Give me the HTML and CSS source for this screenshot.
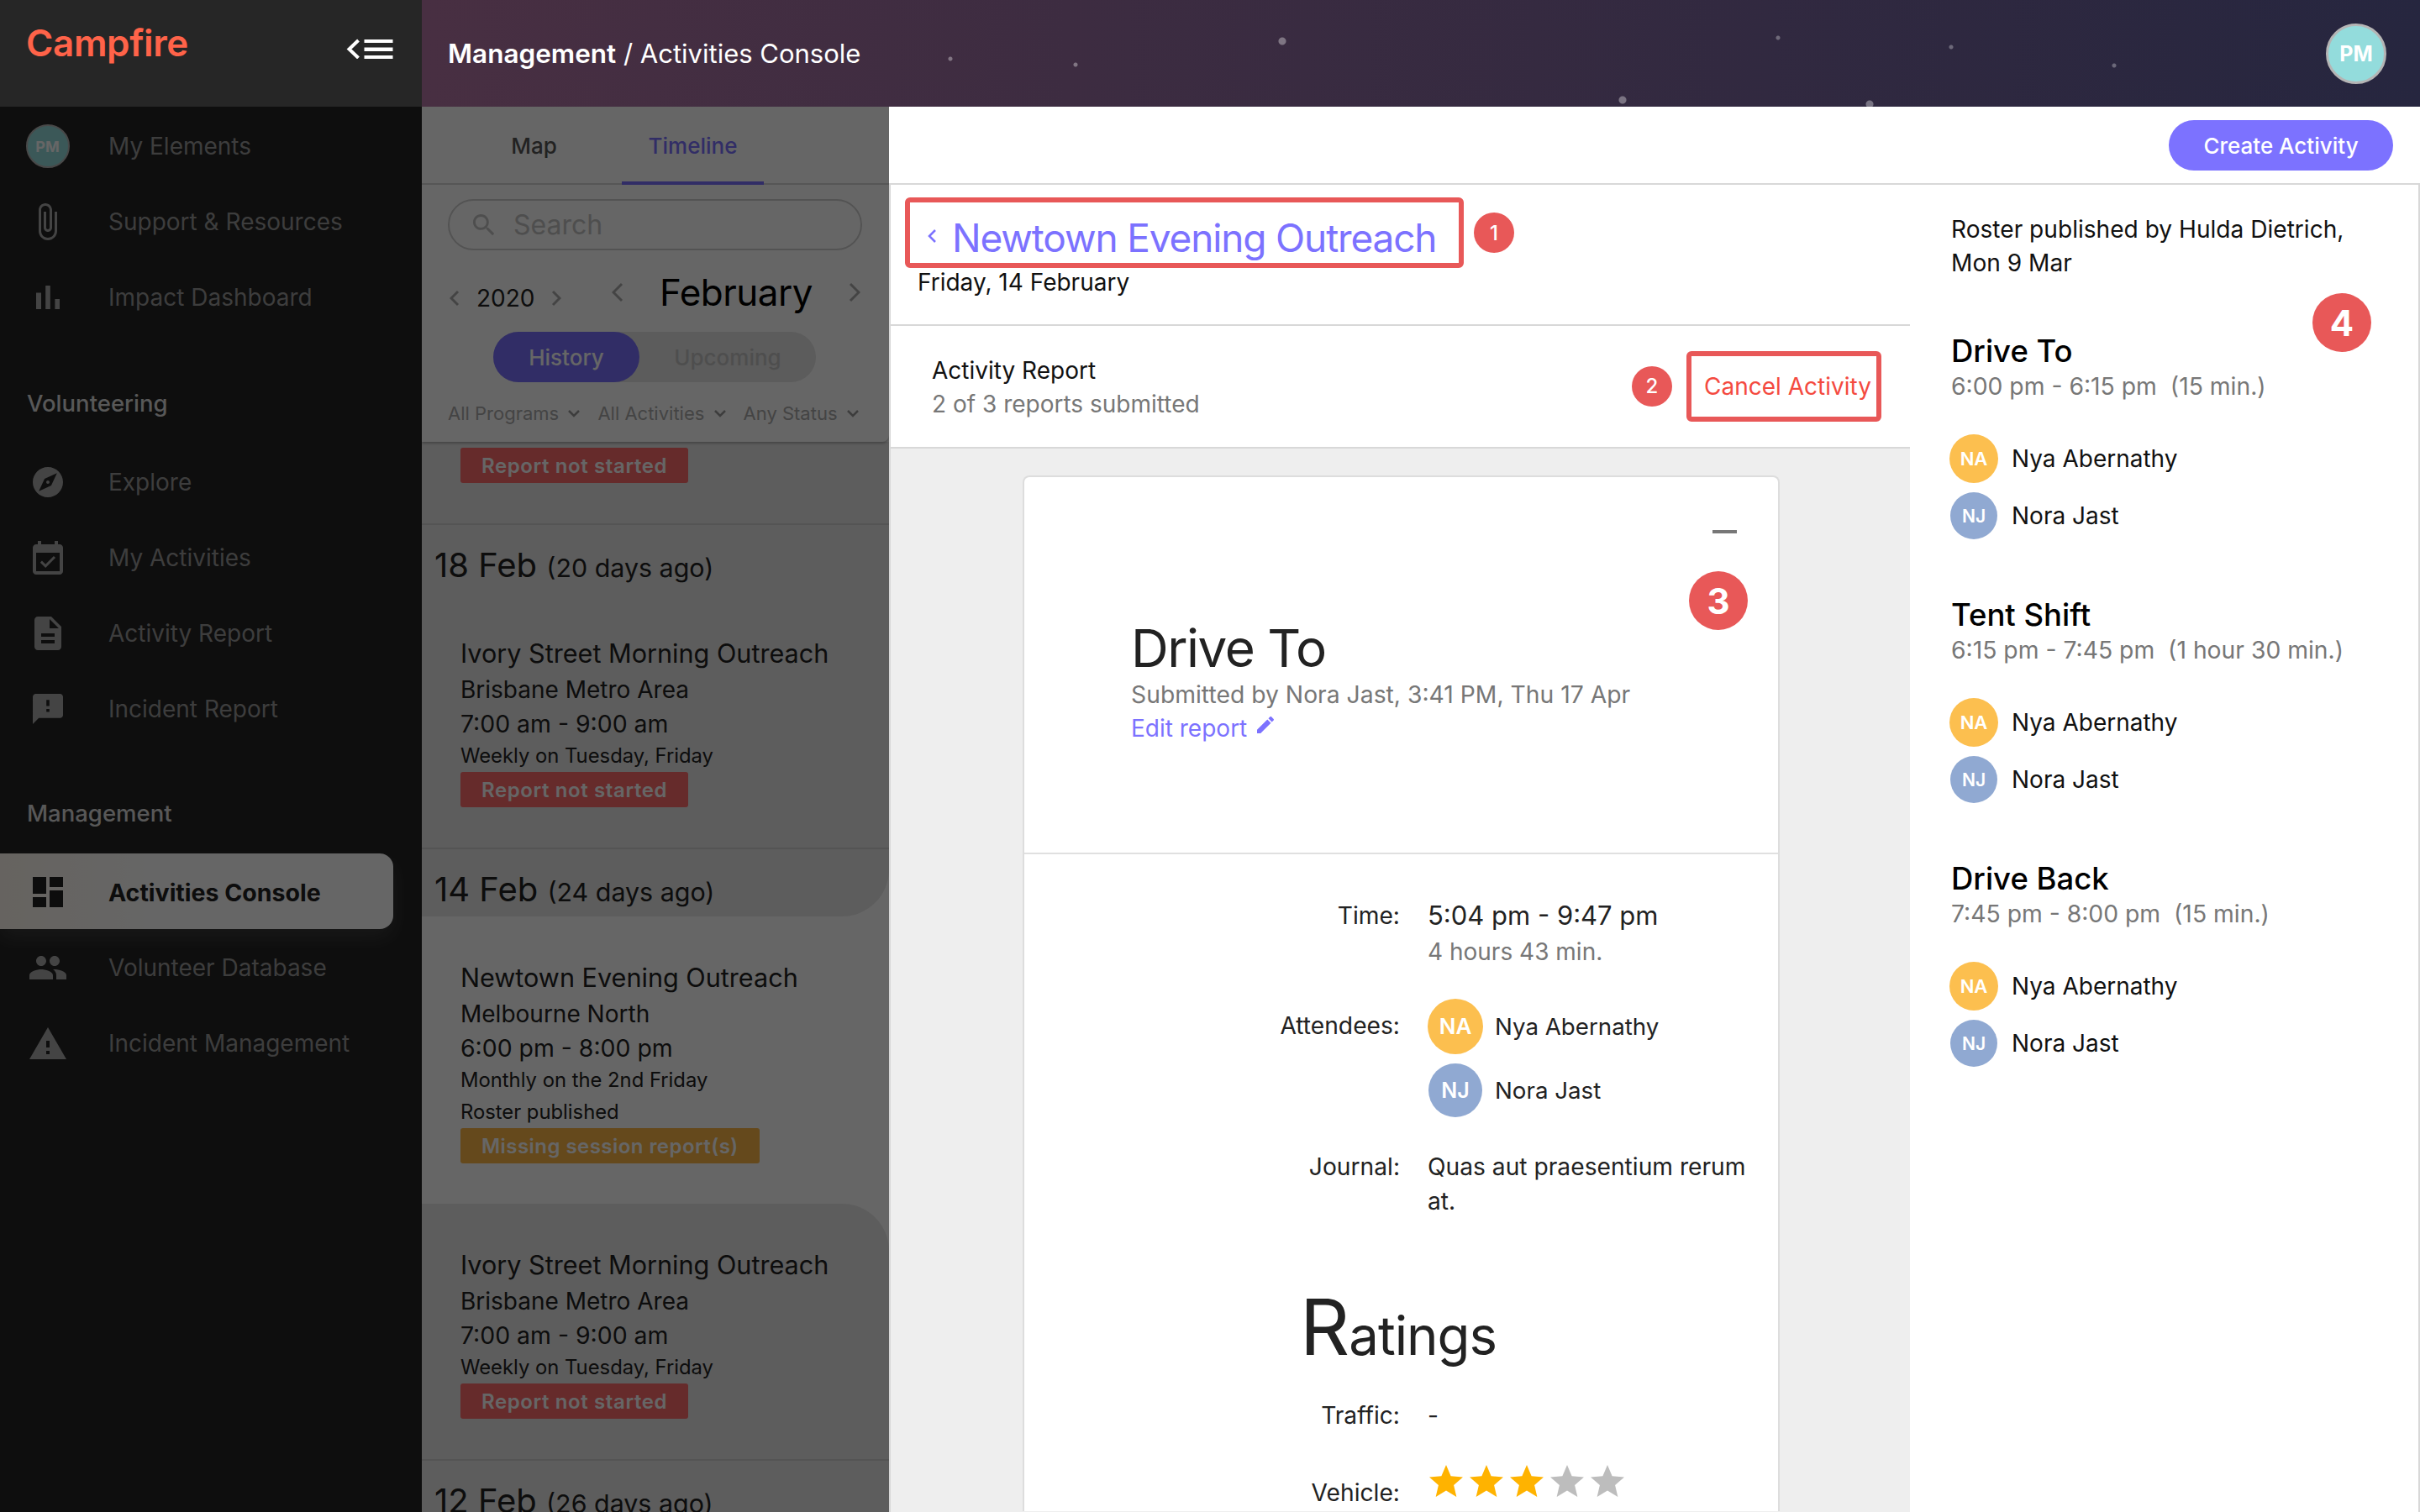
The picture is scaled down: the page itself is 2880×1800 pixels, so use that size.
FILE: index.html
```html
<!DOCTYPE html>
<html lang="en">
  <head>
    <meta charset="UTF-8" />
    <meta name="viewport" content="width=device-width, initial-scale=1.0" />
    <title>Activities Console</title>
    <link rel="stylesheet" href="styles.css">
  </head>
  <body>
    <header class="topbar">
      <div class="brand">
        <span class="logo">Campfire</span>
        <button class="collapse" type="button" aria-label="Collapse menu">
          <svg class="collapse-icon" viewBox="0 0 56 24"><path d="M15 2 4 12.500 15 23" fill="none" stroke="#fff" stroke-width="4"/><path d="M22 1h34v4H22zM22 10.500h34v4.500H22zM22 20h34v4H22z" fill="#fff"/></svg>
        </button>
      </div>
      <div class="crumbs">
        <p class="crumb-text"><strong>Management</strong> / Activities Console</p>
        <div class="avatar avatar-user">PM</div>
      </div>
    </header>

    <div class="main">
      <nav class="sidebar">
        <a class="nav-item"><span class="nav-icon"><span class="avatar avatar-nav">PM</span></span>My Elements</a>
        <a class="nav-item"><span class="nav-icon"><svg class="icon-clip" viewBox="6 1 13 22"><path d="M16.500 6v11.500c0 2.210-1.790 4-4 4s-4-1.790-4-4V5c0-1.380 1.120-2.500 2.500-2.500s2.500 1.120 2.500 2.500v10.500c0 .55-.45 1-1 1s-1-.45-1-1V6H10v9.500c0 1.380 1.120 2.500 2.500 2.500s2.500-1.120 2.500-2.500V5c0-2.210-1.790-4-4-4S7 2.790 7 5v12.500c0 3.040 2.460 5.500 5.500 5.500s5.500-2.460 5.500-5.500V6h-1.500z"/></svg></span>Support &amp; Resources</a>
        <a class="nav-item"><span class="nav-icon"><svg class="icon-bars" viewBox="5 5 14 14"><path d="M5 9.200h3V19H5zM10.600 5h2.800v14h-2.800zm5.600 8H19v6h-2.800z"/></svg></span>Impact Dashboard</a>

        <h3 class="nav-label nav-label-first">Volunteering</h3>
        <a class="nav-item"><span class="nav-icon"><svg class="icon-md" viewBox="2 2 20 20"><path d="M12 10.900c-.61 0-1.100.49-1.100 1.100s.49 1.100 1.100 1.100c.61 0 1.100-.49 1.100-1.100s-.49-1.100-1.100-1.100zM12 2C6.480 2 2 6.480 2 12s4.480 10 10 10 10-4.480 10-10S17.520 2 12 2zm2.190 12.190L6 18l3.810-8.190L18 6l-3.810 8.190z"/></svg></span>Explore</a>
        <a class="nav-item"><span class="nav-icon"><svg class="icon-md" viewBox="3 1 18 20"><path d="M16.530 11.060 15.470 10l-4.880 4.880-2.120-2.120-1.060 1.060L10.590 17l5.940-5.940zM19 3h-1V1h-2v2H8V1H6v2H5c-1.110 0-1.990.9-1.990 2L3 19c0 1.100.89 2 2 2h14c1.100 0 2-.9 2-2V5c0-1.100-.9-2-2-2zm0 16H5V8h14v11z"/></svg></span>My Activities</a>
        <a class="nav-item"><span class="nav-icon"><svg class="icon-md" viewBox="4 2 16 20"><path d="M14 2H6c-1.100 0-1.990.9-1.990 2L4 20c0 1.100.89 2 1.990 2H18c1.100 0 2-.9 2-2V8l-6-6zm2 16H8v-2h8v2zm0-4H8v-2h8v2zm-3-5V3.500L18.500 9H13z"/></svg></span>Activity Report</a>
        <a class="nav-item"><span class="nav-icon"><svg class="icon-md" viewBox="2 2 20 20"><path d="M20 2H4c-1.100 0-1.990.9-1.990 2L2 22l4-4h14c1.100 0 2-.9 2-2V4c0-1.100-.9-2-2-2zm-7 12h-2v-2h2v2zm0-4h-2V6h2v4z"/></svg></span>Incident Report</a>

        <h3 class="nav-label nav-label-second">Management</h3>
        <a class="nav-item nav-item-active"><span class="nav-icon"><svg class="icon-md" viewBox="3 3 18 18"><path d="M3 13h8V3H3v10zm0 8h8v-6H3v6zm10 0h8V11h-8v10zm0-18v6h8V3h-8z"/></svg></span>Activities Console</a>
        <a class="nav-item"><span class="nav-icon"><svg class="icon-wide" viewBox="1 5 22 14"><path d="M16 11c1.660 0 2.990-1.340 2.990-3S17.660 5 16 5c-1.660 0-3 1.340-3 3s1.340 3 3 3zm-8 0c1.660 0 2.990-1.340 2.990-3S9.660 5 8 5C6.340 5 5 6.340 5 8s1.340 3 3 3zm0 2c-2.330 0-7 1.170-7 3.500V19h14v-2.500c0-2.330-4.670-3.500-7-3.500zm8 0c-.29 0-.62.02-.97.05 1.160.84 1.970 1.970 1.970 3.450V19h6v-2.500c0-2.330-4.670-3.500-7-3.500z"/></svg></span>Volunteer Database</a>
        <a class="nav-item"><span class="nav-icon"><svg class="icon-wide" viewBox="1 2 22 19"><path d="M1 21h22L12 2 1 21zm12-3h-2v-2h2v2zm0-4h-2v-4h2v4z"/></svg></span>Incident Management</a>
      </nav>

      <section class="timeline">
        <div class="filters">
          <div class="tabs">
            <span class="tab">Map</span>
            <span class="tab tab-active">Timeline</span>
          </div>
          <div class="search">
            <svg class="search-icon" viewBox="3 3 18 18"><path d="M15.500 14h-.79l-.28-.27C15.410 12.590 16 11.110 16 9.500 16 5.910 13.090 3 9.500 3S3 5.910 3 9.500 5.910 16 9.500 16c1.610 0 3.090-.59 4.230-1.570l.27.28v.79l5 4.990L20.490 19l-4.990-5zm-6 0C7.010 14 5 11.990 5 9.500S7.010 5 9.500 5 14 7.010 14 9.500 11.990 14 9.500 14z"/></svg>
            <span>Search</span>
          </div>
          <div class="date-nav">
            <div class="year-nav">
              <svg class="chev chev-sm" viewBox="0 0 12 20"><path d="M10 2 2 10l8 8"/></svg>
              <span class="year">2020</span>
              <svg class="chev chev-sm" viewBox="0 0 12 20"><path d="M2 2l8 8-8 8"/></svg>
            </div>
            <div class="month-nav">
              <svg class="chev chev-lg" viewBox="0 0 14 24"><path d="M12 2 2 12l10 10"/></svg>
              <span class="month">February</span>
              <svg class="chev chev-lg" viewBox="0 0 14 24"><path d="M2 2l10 10L2 22"/></svg>
            </div>
          </div>
          <div class="toggle">
            <span class="toggle-on">History</span>
            <span class="toggle-off">Upcoming</span>
          </div>
          <div class="filter-row">
            <span class="filter">All Programs <svg class="filter-chev" viewBox="0 0 16 10"><path d="M2 2l6 6 6-6"/></svg></span>
            <span class="filter">All Activities <svg class="filter-chev" viewBox="0 0 16 10"><path d="M2 2l6 6 6-6"/></svg></span>
            <span class="filter">Any Status <svg class="filter-chev" viewBox="0 0 16 10"><path d="M2 2l6 6 6-6"/></svg></span>
          </div>
        </div>

        <div class="list">
          <div class="item item-cut"><span class="badge badge-red">Report not started</span></div>

          <h4 class="day">18 Feb <small>(20 days ago)</small></h4>
          <div class="item">
            <div class="item-title">Ivory Street Morning Outreach</div>
            <div class="item-place">Brisbane Metro Area</div>
            <div class="item-time">7:00 am - 9:00 am</div>
            <div class="item-note">Weekly on Tuesday, Friday</div>
            <span class="badge badge-red">Report not started</span>
          </div>

          <h4 class="day day-before">14 Feb <small>(24 days ago)</small></h4>
          <div class="item item-selected">
            <div class="item-title">Newtown Evening Outreach</div>
            <div class="item-place">Melbourne North</div>
            <div class="item-time">6:00 pm - 8:00 pm</div>
            <div class="item-note">Monthly on the 2nd Friday</div>
            <div class="item-note">Roster published</div>
            <span class="badge badge-amber">Missing session report(s)</span>
          </div>
          <div class="item item-after">
            <div class="item-title">Ivory Street Morning Outreach</div>
            <div class="item-place">Brisbane Metro Area</div>
            <div class="item-time">7:00 am - 9:00 am</div>
            <div class="item-note">Weekly on Tuesday, Friday</div>
            <span class="badge badge-red">Report not started</span>
          </div>

          <h4 class="day">12 Feb <small>(26 days ago)</small></h4>
        </div>
      </section>

      <section class="detail">
        <div class="action-bar">
          <button class="btn-create" type="button">Create Activity</button>
        </div>

        <div class="detail-body">
          <div class="session">
            <div class="session-head">
              <div class="title-row">
                <div class="title-box">
                  <svg class="title-chev" viewBox="0 0 12 18"><path d="M10 2 3 9l7 7"/></svg>
                  <h1 class="title">Newtown Evening Outreach</h1>
                </div>
                <span class="marker marker-sm">1</span>
              </div>
              <p class="session-date">Friday, 14 February</p>
            </div>

            <div class="report-row">
              <div class="report-info">
                <div>Activity Report</div>
                <div class="muted">2 of 3 reports submitted</div>
              </div>
              <span class="marker marker-sm">2</span>
              <div class="cancel-box">Cancel Activity</div>
            </div>

            <div class="report-area">
              <article class="card">
                <div class="card-head">
                  <span class="minus"></span>
                  <span class="marker marker-lg marker-three">3</span>
                  <h2 class="card-title">Drive To</h2>
                  <p class="card-sub">Submitted by Nora Jast, 3:41 PM, Thu 17 Apr</p>
                  <a class="edit-link">Edit report <svg class="edit-icon" viewBox="3 3 18 18"><path d="M3 17.250V21h3.750L17.810 9.940l-3.750-3.750L3 17.250zM20.710 7.040c.39-.39.39-1.020 0-1.410l-2.340-2.340c-.39-.39-1.020-.39-1.410 0l-1.830 1.830 3.750 3.750 1.830-1.830z"/></svg></a>
                </div>
                <div class="card-body">
                  <div class="field field-time">
                    <div class="field-label">Time:</div>
                    <div class="field-value">
                      <div class="time-main">5:04 pm - 9:47 pm</div>
                      <div class="time-sub muted">4 hours 43 min.</div>
                    </div>
                  </div>
                  <div class="field field-people">
                    <div class="field-label">Attendees:</div>
                    <div class="field-value">
                      <div class="person person-lg"><span class="avatar avatar-na">NA</span>Nya Abernathy</div>
                      <div class="person person-lg"><span class="avatar avatar-nj">NJ</span>Nora Jast</div>
                    </div>
                  </div>
                  <div class="field field-journal">
                    <div class="field-label">Journal:</div>
                    <div class="field-value">Quas aut praesentium rerum at.</div>
                  </div>
                  <h2 class="ratings">Ratings</h2>
                  <div class="field field-rate">
                    <div class="field-label">Traffic:</div>
                    <div class="field-value">-</div>
                  </div>
                  <div class="field field-rate field-stars">
                    <div class="field-label">Vehicle:</div>
                    <div class="stars">
                      <svg class="star star-on" viewBox="2 2 20 19"><path d="M12 17.270 18.180 21l-1.640-7.030L22 9.240l-7.190-.61L12 2 9.190 8.630 2 9.240l5.460 4.730L5.820 21z"/></svg>
                      <svg class="star star-on" viewBox="2 2 20 19"><path d="M12 17.270 18.180 21l-1.640-7.030L22 9.240l-7.190-.61L12 2 9.190 8.630 2 9.240l5.460 4.730L5.820 21z"/></svg>
                      <svg class="star star-on" viewBox="2 2 20 19"><path d="M12 17.270 18.180 21l-1.640-7.030L22 9.240l-7.190-.61L12 2 9.190 8.630 2 9.240l5.460 4.730L5.820 21z"/></svg>
                      <svg class="star" viewBox="2 2 20 19"><path d="M12 17.270 18.180 21l-1.640-7.030L22 9.240l-7.190-.61L12 2 9.190 8.630 2 9.240l5.460 4.730L5.820 21z"/></svg>
                      <svg class="star" viewBox="2 2 20 19"><path d="M12 17.270 18.180 21l-1.640-7.030L22 9.240l-7.190-.61L12 2 9.190 8.630 2 9.240l5.460 4.730L5.820 21z"/></svg>
                    </div>
                  </div>
                </div>
              </article>
            </div>
          </div>

          <aside class="roster">
            <span class="marker marker-lg marker-four">4</span>
            <p class="roster-note">Roster published by Hulda Dietrich, Mon 9 Mar</p>

            <div class="shift">
              <h3 class="shift-name">Drive To</h3>
              <div class="shift-time">6:00 pm - 6:15 pm&nbsp; (15 min.)</div>
              <div class="person"><span class="avatar avatar-na">NA</span>Nya Abernathy</div>
              <div class="person"><span class="avatar avatar-nj">NJ</span>Nora Jast</div>
            </div>
            <div class="shift">
              <h3 class="shift-name">Tent Shift</h3>
              <div class="shift-time">6:15 pm - 7:45 pm&nbsp; (1 hour 30 min.)</div>
              <div class="person"><span class="avatar avatar-na">NA</span>Nya Abernathy</div>
              <div class="person"><span class="avatar avatar-nj">NJ</span>Nora Jast</div>
            </div>
            <div class="shift">
              <h3 class="shift-name">Drive Back</h3>
              <div class="shift-time">7:45 pm - 8:00 pm&nbsp; (15 min.)</div>
              <div class="person"><span class="avatar avatar-na">NA</span>Nya Abernathy</div>
              <div class="person"><span class="avatar avatar-nj">NJ</span>Nora Jast</div>
            </div>
          </aside>
        </div>
      </section>
    </div>
  </body>
</html>
```

FILE: styles.css
```css
* {
  box-sizing: border-box;
  margin: 0;
  padding: 0;
  font-family: "Inter", "Liberation Sans", sans-serif;
}

body {
  width: 2880px;
  height: 1800px;
  overflow: hidden;
  background-color: #fff;
  color: #222;
}

/* Top bar */
.topbar {
  display: flex;
  height: 127px;
}

.brand {
  position: relative;
  display: flex;
  align-items: flex-start;
  justify-content: space-between;
  width: 502px;
  padding: 21px 34px 0 31px;
  background-color: #262626;
}

.logo {
  color: #ff6349;
  font-size: 44px;
  font-weight: 600;
  line-height: 60px;
  letter-spacing: -0.4px;
}

.collapse {
  margin-top: 25px;
  border: none;
  background: none;
}

.collapse-icon {
  display: block;
  width: 57px;
  height: 24px;
}

.crumbs {
  display: flex;
  flex: 1;
  align-items: center;
  justify-content: space-between;
  padding: 0 40px 0 31px;
  background:
    radial-gradient(circle at 629px 70px, rgba(255, 255, 255, 0.35) 2px, transparent 3px),
    radial-gradient(circle at 778px 77px, rgba(255, 255, 255, 0.35) 2px, transparent 3px),
    radial-gradient(circle at 1024px 49px, rgba(255, 255, 255, 0.35) 4px, transparent 5px),
    radial-gradient(circle at 1614px 45px, rgba(255, 255, 255, 0.3) 2px, transparent 3px),
    radial-gradient(circle at 1820px 56px, rgba(255, 255, 255, 0.3) 2px, transparent 3px),
    radial-gradient(circle at 2014px 78px, rgba(255, 255, 255, 0.3) 2px, transparent 3px),
    radial-gradient(circle at 1429px 119px, rgba(255, 255, 255, 0.35) 4px, transparent 5px),
    radial-gradient(circle at 1723px 124px, rgba(255, 255, 255, 0.35) 4px, transparent 5px),
    linear-gradient(90deg, #482f42, #26263f);
}

.crumb-text {
  color: #fff;
  font-size: 31px;
}

.crumb-text strong {
  font-size: 31.500px;
  font-weight: 600;
}

/* Avatars */
.avatar {
  display: inline-flex;
  flex: none;
  align-items: center;
  justify-content: center;
  border-radius: 50%;
  color: #fff;
  font-weight: 600;
}

.avatar-user {
  width: 72px;
  height: 72px;
  border: 3px solid #b5b5b5;
  background-color: #93dcdc;
  font-size: 25px;
  font-weight: 700;
}

.avatar-nav {
  width: 52px;
  height: 52px;
  border: 2px solid #b5b5b5;
  background-color: #93dcdc;
  font-size: 18px;
  font-weight: 700;
}

.avatar-na {
  width: 58px;
  height: 58px;
  margin-left: -2px;
  background-color: #fcbf4f;
  font-size: 22px;
}

.avatar-nj {
  width: 56px;
  height: 56px;
  margin: 0 1px 0 -1px;
  background-color: #90a9d2;
  font-size: 21px;
}

/* Layout */
.main {
  display: flex;
  height: 1673px;
}

/* Sidebar + timeline sit under a dark scrim */
.sidebar,
.timeline {
  position: relative;
  flex: none;
  overflow: hidden;
}

.sidebar::after,
.timeline::after {
  content: "";
  position: absolute;
  z-index: 2;
  inset: 0;
  background-color: rgba(0, 0, 0, 0.6);
}

.sidebar {
  width: 502px;
  padding-top: 2px;
  padding-right: 34px;
  background-color: #232323;
}

.nav-item {
  display: flex;
  align-items: center;
  height: 90px;
  color: #9a9a9a;
  font-size: 28px;
}

.nav-icon {
  display: flex;
  flex: none;
  align-items: center;
  justify-content: center;
  width: 129px;
  padding-right: 16px;
  fill: #aaa;
}

.icon-md {
  width: 36px;
  height: 40px;
}

.icon-bars {
  width: 28px;
  height: 28px;
}

.icon-wide {
  width: 44px;
  height: 38px;
}

.icon-clip {
  width: 26px;
  height: 44px;
}

.nav-label {
  margin-left: 32px;
  color: #dcdcdc;
  font-size: 27.500px;
  font-weight: 500;
  line-height: 40px;
}

.nav-label-first {
  margin-top: 61px;
  margin-bottom: 29px;
}

.nav-label-second {
  margin-top: 59px;
  margin-bottom: 28px;
}

.nav-label-second ~ .nav-item {
  padding-top: 2px;
}

.nav-item-active {
  border-radius: 0 16px 16px 0;
  background: linear-gradient(90deg, #fff8ef, #fff 40%);
  box-shadow: 0 10px 24px rgba(255, 255, 255, 0.12);
  color: #222;
  font-size: 28.500px;
  font-weight: 700;
}

.nav-item-active .nav-icon {
  fill: #222;
}

/* Timeline panel */
.timeline {
  display: flex;
  flex-direction: column;
  width: 556px;
  background-color: #fff;
}

.filters {
  position: relative;
  z-index: 1;
  flex: none;
  height: 399px;
  border-radius: 0 0 8px 0;
  background-color: #fff;
  box-shadow: 0 2px 3px rgba(0, 0, 0, 0.25);
}

.tabs {
  display: flex;
  height: 93px;
  border-bottom: 2px solid #d6d6d6;
}

.tab {
  display: flex;
  align-items: center;
  justify-content: center;
  width: 169px;
  height: 93px;
  margin-left: 49px;
  color: #555;
  font-size: 26px;
  font-weight: 500;
}

.tab + .tab {
  margin-left: 20px;
}

.tab-active {
  padding-top: 3px;
  border-bottom: 4px solid #7c72ff;
  color: #7c72ff;
}

.search {
  display: flex;
  align-items: center;
  height: 61px;
  margin: 17px 32px 0 31px;
  border: 2px solid #cfcfcf;
  border-radius: 31px;
  color: #c4c4c4;
  font-size: 32px;
  fill: #c4c4c4;
}

.search-icon {
  width: 26px;
  height: 26px;
  margin: 0 22px 0 28px;
}

.date-nav {
  display: flex;
  align-items: center;
  justify-content: space-between;
  height: 97px;
  padding: 2px 34px 0 33px;
}

.chev {
  flex: none;
  fill: none;
  stroke: #aaa;
  stroke-width: 3;
}

.chev-sm {
  width: 12px;
  height: 20px;
}

.chev-lg {
  width: 14px;
  height: 24px;
}

.year-nav {
  display: flex;
  align-items: center;
  gap: 20px;
  padding-top: 14px;
}

.year {
  color: #222;
  font-size: 28px;
}

.month-nav {
  display: flex;
  align-items: center;
  gap: 43px;
}

.month {
  color: #000;
  font-size: 44px;
  letter-spacing: -0.5px;
}

.toggle {
  display: flex;
  width: 384px;
  height: 60px;
  margin-left: 85px;
  border-radius: 30px;
  background-color: #e6e6e6;
  font-size: 26px;
  font-weight: 500;
}

.toggle-on {
  display: flex;
  align-items: center;
  justify-content: center;
  width: 174px;
  border-radius: 30px;
  background-color: #7c72ff;
  color: #fff;
}

.toggle-off {
  display: flex;
  flex: 1;
  align-items: center;
  justify-content: center;
  color: #c4c4c4;
}

.filter-row {
  display: flex;
  gap: 20px;
  height: 71px;
  padding: 0 0 0 31px;
  line-height: 74px;
}

.filter {
  color: #aaa;
  font-size: 22px;
  white-space: nowrap;
}

.filter-chev {
  width: 16px;
  height: 10px;
  margin-left: 4px;
  vertical-align: 3px;
  fill: none;
  stroke: #999;
  stroke-width: 2.500;
}

.list {
  flex: 1;
  overflow: hidden;
  background-color: #fff;
}

.day {
  height: 82px;
  padding: 28px 0 0 15px;
  border-top: 2px solid #d2d2d2;
  background-color: #e8e8e8;
  color: #222;
  font-size: 40px;
  font-weight: 400;
  line-height: 40px;
}

.day small {
  font-size: 30.400px;
}

.day-before {
  border-radius: 0 0 56px 0;
}

.item {
  padding: 51px 0 49px 46px;
  background-color: #e8e8e8;
  color: #222;
}

.item-cut {
  padding-top: 7px;
}

.item-selected {
  background-color: #fff;
}

.item-after {
  border-radius: 0 56px 0 0;
}

.item-title {
  font-size: 30.600px;
  line-height: 44px;
}

.item-place {
  margin-top: -1px;
  font-size: 28px;
  line-height: 44px;
}

.item-time {
  font-size: 28.400px;
  line-height: 38px;
}

.item-note {
  font-size: 23.800px;
  line-height: 38px;
}

.badge {
  display: block;
  width: fit-content;
  height: 42px;
  margin-bottom: -1px;
  padding: 1px 25px 0;
  border-radius: 3px;
  color: #fff;
  font-size: 24px;
  font-weight: 600;
  line-height: 41px;
  letter-spacing: 0.6px;
}

.badge-red {
  background-color: #ff6b6b;
}

.badge-amber {
  background-color: #fcb646;
  letter-spacing: 0.450px;
}

/* Detail area */
.detail {
  display: flex;
  flex: 1;
  flex-direction: column;
  min-width: 0;
  background-color: #fff;
}

.action-bar {
  display: flex;
  flex: none;
  align-items: flex-start;
  justify-content: flex-end;
  height: 93px;
  padding: 16px 32px 0 0;
  border-bottom: 2px solid #d8d8d8;
}

.btn-create {
  width: 267px;
  height: 60px;
  border: none;
  border-radius: 30px;
  background-color: #7c72ff;
  color: #fff;
  font-size: 26px;
  font-weight: 500;
}

.detail-body {
  display: flex;
  flex: 1;
  min-height: 0;
  border-right: 2px solid #d8d8d8;
  border-left: 2px solid #d8d8d8;
}

.session {
  display: flex;
  flex: none;
  flex-direction: column;
  width: 1213px;
  background-color: #eee;
}

.session-head {
  flex: none;
  height: 168px;
  padding: 15px 0 0 17px;
  border-bottom: 2px solid #d8d8d8;
  background-color: #fff;
}

.title-row {
  display: flex;
  align-items: center;
  gap: 12px;
}

.title-box {
  display: flex;
  align-items: center;
  width: 665px;
  height: 84px;
  padding-top: 12px;
  border: 6px solid #e85858;
  border-radius: 6px;
}

.title-chev {
  flex: none;
  width: 12px;
  height: 18px;
  margin: -4px 18px 0 20px;
  fill: none;
  stroke: #7c72ff;
  stroke-width: 2.500;
}

.title {
  color: #7c72ff;
  font-size: 46px;
  font-weight: 400;
  letter-spacing: -1.150px;
  white-space: nowrap;
}

.session-date {
  margin: -1px 0 0 15px;
  color: #111;
  font-size: 28px;
  line-height: 36px;
}

.marker {
  display: inline-flex;
  flex: none;
  align-items: center;
  justify-content: center;
  border-radius: 50%;
  background-color: #e85858;
  color: #fff;
}

.marker-sm {
  width: 48px;
  height: 48px;
  font-size: 24px;
  font-weight: 500;
}

.marker-lg {
  position: absolute;
  z-index: 1;
  width: 70px;
  height: 70px;
  font-size: 42px;
  font-weight: 700;
}

.report-row {
  display: flex;
  flex: none;
  align-items: center;
  height: 146px;
  padding: 0 34px 0 49px;
  border-bottom: 2px solid #d8d8d8;
  background-color: #fff;
  color: #111;
  font-size: 28px;
  line-height: 40px;
}

.report-info {
  flex: 1;
  padding-top: 2px;
}

.muted {
  color: #777;
}

.cancel-box {
  display: flex;
  align-items: center;
  width: 232px;
  height: 84px;
  margin-left: 17px;
  padding-left: 15px;
  border: 6px solid #e85858;
  border-radius: 6px;
  color: #f44a3f;
  white-space: nowrap;
}

.report-area {
  flex: 1;
  min-height: 0;
  padding: 32px 0 0 157px;
}

.card {
  width: 901px;
  border: 2px solid #ddd;
  border-bottom: none;
  border-radius: 8px 8px 0 0;
  background-color: #fff;
}

.card-head {
  position: relative;
  height: 449px;
  padding: 167px 0 0 127px;
  border-bottom: 2px solid #e0e0e0;
}

.minus {
  position: absolute;
  top: 63px;
  right: 49px;
  width: 29px;
  height: 4px;
  background-color: #777;
}

.marker-three {
  top: 112px;
  right: 36px;
}

.card-title {
  font-size: 62px;
  font-weight: 400;
  line-height: 74px;
  letter-spacing: -1.500px;
}

.card-sub {
  color: #777;
  font-size: 28.300px;
  line-height: 36px;
}

.edit-link {
  color: #7c72ff;
  font-size: 28px;
  line-height: 44px;
}

.edit-icon {
  width: 20px;
  height: 20px;
  margin-left: 4px;
  fill: #7c72ff;
  vertical-align: 4px;
}

.field {
  display: grid;
  grid-template-columns: 447px 400px;
  column-gap: 33px;
  font-size: 28.200px;
}

.field-label {
  color: #222;
  text-align: right;
}

.field-time {
  padding-top: 51px;
  line-height: 44px;
}

.time-main {
  font-size: 31px;
}

.time-sub {
  padding-top: 1px;
  font-size: 28px;
  line-height: 40px;
}

.field-people {
  padding-top: 36px;
  line-height: 64px;
}

.person {
  display: flex;
  align-items: center;
  gap: 16px;
  margin-top: 11px;
  font-size: 28px;
}

.person-lg {
  gap: 14px;
  margin: 0 0 11px;
  font-size: 27.700px;
}

.person-lg .avatar-na {
  width: 66px;
  height: 66px;
  margin-left: 0;
  font-size: 26px;
}

.person-lg .avatar-nj {
  width: 64px;
  height: 64px;
  margin: 0 1px;
  font-size: 25px;
}

.field-journal {
  padding-top: 28px;
  line-height: 41px;
}

.ratings {
  height: 211px;
  padding: 79px 0 0 328px;
  font-size: 63.500px;
  font-weight: 400;
  line-height: 100px;
  letter-spacing: -1px;
}

.ratings::first-letter {
  font-size: 92px;
}

.field-rate {
  padding-top: 1px;
  line-height: 44px;
}

.field-stars {
  padding-top: 35px;
}

.field-stars .field-label {
  padding-top: 13px;
}

.stars {
  display: flex;
  gap: 8px;
  margin: 2px 0 0 2px;
}

.star {
  width: 40px;
  height: 38px;
  fill: #bdbdbd;
}

.star-on {
  fill: #ffb300;
}

/* Roster column */
.roster {
  position: relative;
  flex: 1;
  padding: 33px 40px 0 49px;
  color: #111;
}

.marker-four {
  top: 129px;
  right: 56px;
}

.roster-note {
  width: 500px;
  margin-bottom: 60px;
  font-size: 28.100px;
  line-height: 40px;
}

.shift {
  height: 314px;
}

.shift-name {
  color: #000;
  font-size: 36.500px;
  font-weight: 500;
  line-height: 50px;
}

.shift-time {
  margin-bottom: 40px;
  color: #777;
  font-size: 28.300px;
  line-height: 34px;
}
```
